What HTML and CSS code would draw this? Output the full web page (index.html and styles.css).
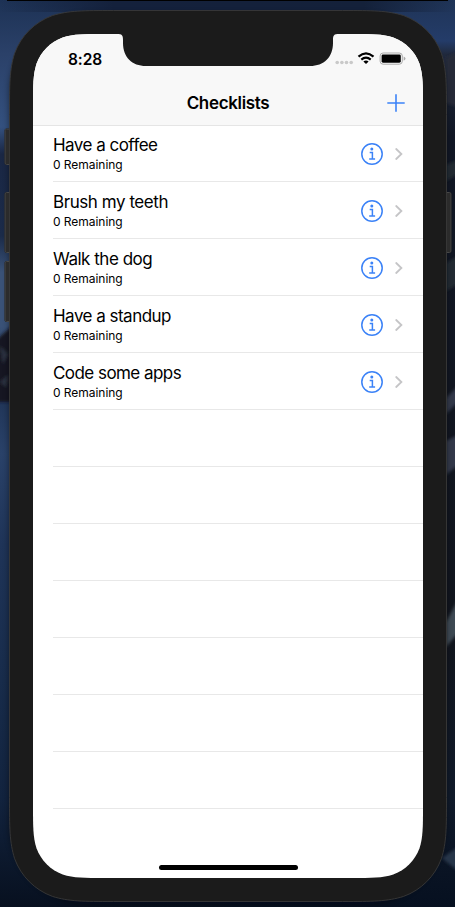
FILE: index.html
```html
<!DOCTYPE html>
<html lang="en">
<head>
<meta charset="utf-8">
<title>Checklists</title>
<link rel="stylesheet" href="styles.css">
</head>
<body>
<svg class="wallpaper" viewBox="0 0 455 907" aria-hidden="true">
  <defs>
    <linearGradient id="left" x2="0" y2="1">
      <stop offset="0" stop-color="#1d3255"/><stop offset=".06" stop-color="#2b4169"/><stop offset=".14" stop-color="#34517f"/><stop offset=".17" stop-color="#1a2744"/><stop offset=".26" stop-color="#1b2b49"/><stop offset=".3" stop-color="#3a5277"/><stop offset=".36" stop-color="#3a5277"/><stop offset=".41" stop-color="#1c2f50"/><stop offset=".5" stop-color="#2a4269"/><stop offset=".6" stop-color="#1f3458"/><stop offset=".75" stop-color="#182c4b"/><stop offset=".88" stop-color="#12233e"/><stop offset="1" stop-color="#07101f"/>
    </linearGradient>
    <linearGradient id="right" x2="0" y2="1">
      <stop offset="0" stop-color="#1f3457"/><stop offset=".045" stop-color="#243c69"/><stop offset=".06" stop-color="#20293c"/><stop offset=".15" stop-color="#111725"/><stop offset=".7" stop-color="#11151d"/><stop offset=".88" stop-color="#101a2a"/><stop offset="1" stop-color="#061020"/>
    </linearGradient>
    <linearGradient id="top">
      <stop offset="0" stop-color="#14213c" stop-opacity="0"/><stop offset=".25" stop-color="#14213c"/><stop offset=".8" stop-color="#14213a"/><stop offset="1" stop-color="#14213a" stop-opacity="0"/>
    </linearGradient>
    <filter id="soft"><feGaussianBlur stdDeviation="1.8"/></filter>
    <filter id="shade"><feGaussianBlur stdDeviation="3"/></filter>
  </defs>
  <rect width="228" height="907" fill="url(#left)"/>
  <rect x="227" width="228" height="907" fill="url(#right)"/>
  <rect width="455" height="12" fill="url(#top)"/>
  <g filter="url(#soft)">
    <path d="M-4 340l16-14v76H-4z" fill="#151824"/>
    <path d="M0 346l8 8-5 10zM0 382l8-7-2 12z" fill="#2c3240"/>
    <path d="M446 58l12-6v55l-12-4z" fill="#262c37"/>
    <path d="M446 165l12-5v14l-12 7zM446 263l12-7v28l-12 7z" fill="#202a32"/>
    <path d="M446 398l12-12v16l-12 12zM446 441l12-6v30l-12 10z" fill="#30374a"/>
    <path d="M446 622l12-22v33l-12 14z" fill="#3d4852"/>
    <path d="M442 858l16-11v24l-10-8z" fill="#28364a"/>
  </g>
  <rect x="9" y="14" width="437" height="890" rx="80" fill="#02060d" opacity=".45" filter="url(#shade)"/>
  <path d="M7 0H448V1H7z"/>
</svg>

<main class="phone">
  <svg class="shell" viewBox="0 0 455 907" aria-hidden="true">
    <g class="buttons">
      <path d="M12 129H6.500Q5 129 5 130.500V163Q5 164.500 6.500 164.500H12M12 192.500H6.500Q5 192.500 5 194V251Q5 252.500 6.500 252.500H12M12 261.500H6.500Q5 261.500 5 263V320Q5 321.500 6.500 321.500H12M444 192.500H449.500Q451 192.500 451 194V251Q451 252.500 449.500 252.500H444"/>
    </g>
    <path class="body" transform="translate(9.500 10.500)" d="M103.900 0H333.100C363 0 378 0 394.100 5.100C411.700 11.500 425.500 25.300 431.900 42.900C437 59 437 74 437 103.900V787.100C437 817 437 832 431.900 848.100C425.500 865.700 411.700 879.500 394.100 885.900C378 891 363 891 333.100 891H103.900C74 891 59 891 42.900 885.900C25.300 879.500 11.500 865.700 5.100 848.100C0 832 0 817 0 787.100V103.900C0 74 0 59 5.100 42.900C11.500 25.300 25.300 11.500 42.900 5.100C59 0 74 0 103.900 0Z"/>
  </svg>
  <section class="screen">
    <header class="topbar">
      <div class="status">
        <span class="time">8:28</span>
        <svg class="indicators" viewBox="0 0 71 16" aria-hidden="true">
          <g fill="#c9c9c9"><circle cx="2.200" cy="10.500" r="1.800"/><circle cx="6.900" cy="10.500" r="1.800"/><circle cx="11.500" cy="10.500" r="1.800"/><circle cx="16.200" cy="10.500" r="1.800"/></g>
          <g fill="none" stroke="#000" stroke-width="2.200"><path d="M23.500 4.600Q31 -2 38.500 4.600M26.300 7.600Q31 3.700 35.700 7.600"/></g>
          <path d="M28.400 9.400Q31 7.400 33.600 9.400L31 12.100Z"/>
          <rect x="45.100" y="1" width="22.200" height="11.200" rx="3" fill="#f8f8f8" stroke="#aaa"/>
          <rect x="46.600" y="2.500" width="19.200" height="8.200" rx="1.400"/>
          <path d="M68.700 4.500Q70.500 5.300 70.500 6.600T68.700 8.700Z" fill="#aaa"/>
        </svg>
      </div>
      <div class="navbar">
        <h1>Checklists</h1>
        <svg class="add" viewBox="0 0 18 18" aria-label="Add"><path d="M9 .300V17.700M.300 9H17.700"/></svg>
      </div>
    </header>
    <svg class="notch" viewBox="0 0 222 32" aria-hidden="true"><path d="M0 0C5 0 6 1 6 6V9C6 23 15 32 29 32H193C207 32 216 23 216 9V6C216 1 217 0 222 0Z"/></svg>
    <ul class="list">
      <li><div class="label"><span class="title t1">Have a coffee</span><span class="detail">0 Remaining</span></div><svg class="info" viewBox="0 0 22 22"><use href="#info"/></svg><svg class="chevron" viewBox="0 0 8 12"><use href="#chevron"/></svg></li>
      <li><div class="label"><span class="title t2">Brush my teeth</span><span class="detail">0 Remaining</span></div><svg class="info" viewBox="0 0 22 22"><use href="#info"/></svg><svg class="chevron" viewBox="0 0 8 12"><use href="#chevron"/></svg></li>
      <li><div class="label"><span class="title t3">Walk the dog</span><span class="detail">0 Remaining</span></div><svg class="info" viewBox="0 0 22 22"><use href="#info"/></svg><svg class="chevron" viewBox="0 0 8 12"><use href="#chevron"/></svg></li>
      <li><div class="label"><span class="title t4">Have a standup</span><span class="detail">0 Remaining</span></div><svg class="info" viewBox="0 0 22 22"><use href="#info"/></svg><svg class="chevron" viewBox="0 0 8 12"><use href="#chevron"/></svg></li>
      <li><div class="label"><span class="title t5">Code some apps</span><span class="detail">0 Remaining</span></div><svg class="info" viewBox="0 0 22 22"><use href="#info"/></svg><svg class="chevron" viewBox="0 0 8 12"><use href="#chevron"/></svg></li>
      <li></li><li></li><li></li><li></li><li></li><li></li><li></li>
    </ul>
    <div class="home"></div>
  </section>
</main>

<svg class="symbols" aria-hidden="true">
  <symbol id="info" viewBox="0 0 22 22"><circle cx="11" cy="11" r="10.200" fill="none" stroke="#3b82f7" stroke-width="1.500"/><circle cx="10.800" cy="6.100" r="1.500" fill="#3b82f7"/><path d="M8.700 9.500H11.400V15.900M8.200 16H14.100" fill="none" stroke="#3b82f7" stroke-width="1.500"/></symbol>
  <symbol id="chevron" viewBox="0 0 8 12"><path d="M1.200 1L6.400 6L1.200 11" fill="none" stroke="#c5c5c7" stroke-width="1.800" stroke-linecap="round"/></symbol>
</svg>
</body>
</html>
```
FILE: styles.css
```css
* { box-sizing: border-box; }
body {
  margin: 0;
  width: 455px;
  height: 907px;
  overflow: hidden;
  position: relative;
  background: #14213c;
  font-family: Inter, "Liberation Sans", sans-serif;
  color: #000;
}
svg { display: block; }
.symbols { position: absolute; width: 0; height: 0; }
.wallpaper, .shell { position: absolute; left: 0; top: 0; width: 455px; height: 907px; }
.phone { position: relative; padding: 34px 32px 29px 33px; }
.body { fill: #1b1b1b; stroke: #393939; stroke-width: .9; }
.buttons { fill: #2b2b2b; stroke: #4c4c4c; stroke-width: .9; filter: drop-shadow(0 0 .7px #000); }
.screen {
  position: relative;
  display: flex;
  flex-direction: column;
  width: 390px;
  height: 844px;
  background: #fff;
  clip-path: path("M71.8 0H318.200C338.800 0 349.200 0 360.300 3.500C372.500 8 382 17.500 386.500 29.700C390 40.800 390 51.200 390 71.800V772.200C390 792.800 390 803.200 386.500 814.300C382 826.500 372.500 836 360.300 840.500C349.200 844 338.800 844 318.200 844H71.800C51.200 844 40.800 844 29.700 840.500C17.500 836 8 826.500 3.500 814.300C0 803.200 0 792.800 0 772.200V71.800C0 51.200 0 40.800 3.500 29.700C8 17.500 17.500 8 29.700 3.500C40.800 0 51.200 0 71.800 0Z");
}
.topbar { height: 92px; background: #f8f8f8; border-bottom: 1px solid #e5e5e5; }
.status {
  display: flex;
  justify-content: space-between;
  height: 47px;
  padding: 16px 17px 0 35px;
}
.time { font-size: 15.5px; line-height: 19px; font-weight: 600; letter-spacing: -.1px; }
.indicators { width: 71px; height: 16px; margin-top: 2px; }
.navbar {
  display: grid;
  grid-template-columns: 1fr auto 1fr;
  align-items: center;
  height: 44px;
  padding-right: 18px;
  padding-left: 18px;
}
h1 { grid-column: 2; margin: 0; font-size: 17px; line-height: 22px; font-weight: 600; letter-spacing: -.34px; }
.add { justify-self: end; width: 18px; height: 18px; fill: none; stroke: #3b82f7; stroke-width: 1.6; }
.notch { position: absolute; top: 0; left: 84px; width: 222px; height: 32px; fill: #1b1b1b; }
.list { list-style: none; margin: -1px 0 0; padding: 0 0 0 20px; }
.list li {
  display: flex;
  align-items: center;
  height: 57px;
  padding-right: 20px;
  border-bottom: 1px solid #e8e8e8;
}
.label { display: flex; flex: 1; flex-direction: column; }
.title { font-size: 17px; line-height: 21px; white-space: nowrap; }
.t1 { letter-spacing: -.53px; }
.t2 { letter-spacing: -.44px; }
.t3 { letter-spacing: -.48px; }
.t4 { letter-spacing: -.52px; }
.t5 { letter-spacing: -.55px; }
.detail { font-size: 12px; line-height: 14px; margin-top: 2px; letter-spacing: -.04px; white-space: nowrap; }
.info { width: 22px; height: 22px; margin: 1px 12px 0 0; }
.chevron { width: 8px; height: 12px; margin-top: 1px; }
.home { width: 139px; height: 5px; border-radius: 3px; background: #000; position: absolute; left: 126px; bottom: 8px; }
```
